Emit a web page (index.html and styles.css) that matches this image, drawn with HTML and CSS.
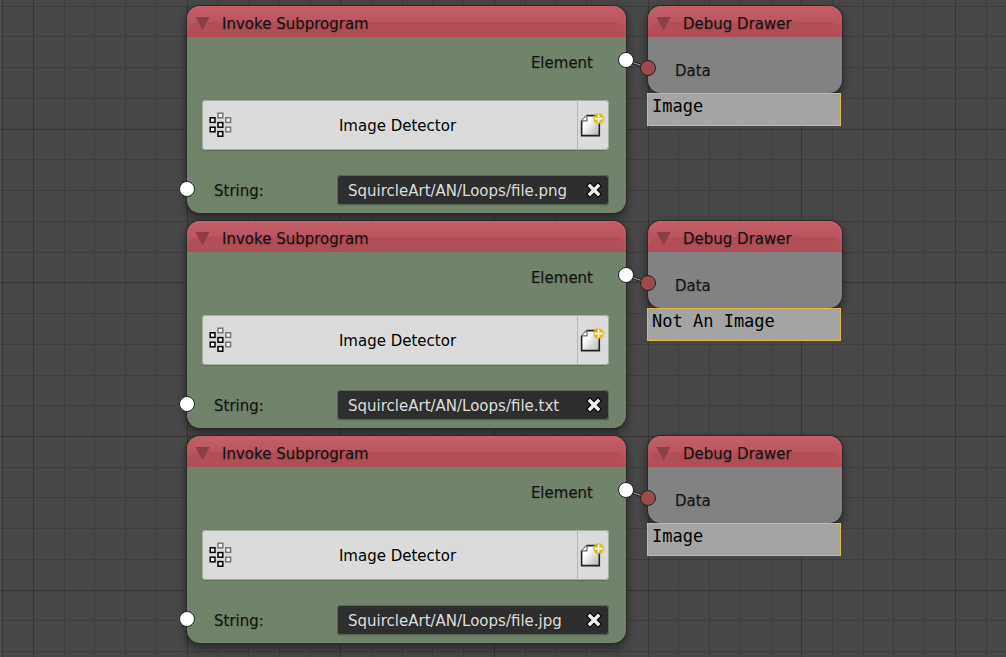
FILE: index.html
```html
<!DOCTYPE html>
<html lang="en">
<head>
<meta charset="utf-8">
<title>Node Editor</title>
<link rel="stylesheet" href="styles.css">
</head>
<body>
<svg class="defs" width="0" height="0" aria-hidden="true">
  <defs>
    <linearGradient id="paper" x1="0" y1="0" x2="1" y2="1">
      <stop offset="0.3" stop-color="#fff"/>
      <stop offset="1" stop-color="#b4b4b4"/>
    </linearGradient>
    <radialGradient id="glow">
      <stop offset="0.3" stop-color="#e3b70c"/>
      <stop offset="0.7" stop-color="#e3b70c" stop-opacity="0.85"/>
      <stop offset="1" stop-color="#e3b70c" stop-opacity="0"/>
    </radialGradient>
    <symbol id="icon-tree" viewBox="0 0 24 26">
      <g fill="#f4f4f4" stroke-width="1.5">
        <g stroke="#777">
          <rect x="9" y="1.2" width="4.8" height="4.6"/>
          <rect x="16.8" y="5.8" width="4.8" height="4.6"/>
          <rect x="16.8" y="15.2" width="4.8" height="4.6"/>
        </g>
        <g stroke="#000">
          <rect x="1.2" y="5.8" width="4.8" height="4.6"/>
          <rect x="1.2" y="15.2" width="4.8" height="4.6"/>
          <rect x="9" y="10.6" width="4.8" height="4.6"/>
          <rect x="9" y="19.6" width="4.8" height="4.6"/>
        </g>
      </g>
    </symbol>
    <symbol id="icon-new" viewBox="0 0 26 26">
      <path d="M8 3.6H20.3V23.6H2.6V9.2z" fill="url(#paper)" stroke="#222" stroke-width="1.6"/>
      <path d="M8 3.6V8.8H2.6" fill="#fff" stroke="#666" stroke-width="1.2"/>
      <circle cx="19.6" cy="6.6" r="6.4" fill="url(#glow)"/>
      <path d="M19.6 2.6v8M15.6 6.6h8" stroke="#fff" stroke-width="1.6"/>
    </symbol>
    <symbol id="icon-x" viewBox="0 0 16 16">
      <path d="M4 4L12 12M12 4L4 12" stroke="#000" stroke-width="5.6" stroke-linecap="square"/>
      <path d="M4 4L12 12M12 4L4 12" stroke="#eee" stroke-width="3.4" stroke-linecap="square"/>
    </symbol>
    <symbol id="icon-fold" viewBox="0 0 16 16">
      <path d="M0.5 1H15.5L8 15.5z" fill="#8a3f48"/>
    </symbol>
    <pattern id="grid" x="33" y="129" width="461" height="461" patternUnits="userSpaceOnUse">
      <path class="minor" d="M31 0h1v461h-1zM61 0h1v461h-1zM92 0h1v461h-1zM123 0h1v461h-1zM184 0h1v461h-1zM215 0h1v461h-1zM246 0h1v461h-1zM277 0h1v461h-1zM338 0h1v461h-1zM369 0h1v461h-1zM399 0h1v461h-1zM430 0h1v461h-1z"/>
      <path class="minor" d="M0 30h461v1H0zM0 61h461v1H0zM0 92h461v1H0zM0 123h461v1H0zM0 184h461v1H0zM0 215h461v1H0zM0 246h461v1H0zM0 276h461v1H0zM0 338h461v1H0zM0 368h461v1H0zM0 399h461v1H0zM0 430h461v1H0z"/>
      <path class="major" d="M0 0h1v461h-1zM154 0h1v461h-1zM307 0h1v461h-1zM0 0h461v1H0zM0 153h461v1H0zM0 307h461v1H0z"/>
    </pattern>
  </defs>
</svg>
<main class="editor">
  <svg class="grid" width="100%" height="100%" aria-hidden="true"><rect width="100%" height="100%" fill="url(#grid)"/></svg>

  <section class="row">
    <article class="node invoke">
      <header class="head"><button class="fold" aria-label="Collapse"><svg><use href="#icon-fold"/></svg></button><h2>Invoke Subprogram</h2></header>
      <div class="body">
        <div class="out">Element</div>
        <div class="picker">
          <button class="choose"><svg class="tree"><use href="#icon-tree"/></svg><span>Image Detector</span></button>
          <button class="new" aria-label="New subprogram"><svg><use href="#icon-new"/></svg></button>
        </div>
        <div class="prop">
          <label for="s1">String:</label>
          <div class="field"><input id="s1" type="text" value="SquircleArt/AN/Loops/file.png"><button class="clear" aria-label="Clear"><svg><use href="#icon-x"/></svg></button></div>
        </div>
      </div>
      <i class="socket in"></i>
    </article>
    <div class="debug">
      <article class="node drawer">
        <header class="head"><button class="fold" aria-label="Collapse"><svg><use href="#icon-fold"/></svg></button><h2>Debug Drawer</h2></header>
        <div class="data">Data</div>
      </article>
      <output class="result">Image</output>
      <svg class="link" viewBox="0 0 40 26" aria-hidden="true"><path d="M9 9L31 17" stroke="#222" stroke-width="3"/><path d="M9 9L31 17" stroke="#aaa"/><circle class="white" cx="9" cy="9" r="7.5"/><circle class="red" cx="31" cy="17" r="7.5"/></svg>
    </div>
  </section>

  <section class="row">
    <article class="node invoke">
      <header class="head"><button class="fold" aria-label="Collapse"><svg><use href="#icon-fold"/></svg></button><h2>Invoke Subprogram</h2></header>
      <div class="body">
        <div class="out">Element</div>
        <div class="picker">
          <button class="choose"><svg class="tree"><use href="#icon-tree"/></svg><span>Image Detector</span></button>
          <button class="new" aria-label="New subprogram"><svg><use href="#icon-new"/></svg></button>
        </div>
        <div class="prop">
          <label for="s2">String:</label>
          <div class="field"><input id="s2" type="text" value="SquircleArt/AN/Loops/file.txt"><button class="clear" aria-label="Clear"><svg><use href="#icon-x"/></svg></button></div>
        </div>
      </div>
      <i class="socket in"></i>
    </article>
    <div class="debug">
      <article class="node drawer">
        <header class="head"><button class="fold" aria-label="Collapse"><svg><use href="#icon-fold"/></svg></button><h2>Debug Drawer</h2></header>
        <div class="data">Data</div>
      </article>
      <output class="result">Not An Image</output>
      <svg class="link" viewBox="0 0 40 26" aria-hidden="true"><path d="M9 9L31 17" stroke="#222" stroke-width="3"/><path d="M9 9L31 17" stroke="#aaa"/><circle class="white" cx="9" cy="9" r="7.5"/><circle class="red" cx="31" cy="17" r="7.5"/></svg>
    </div>
  </section>

  <section class="row">
    <article class="node invoke">
      <header class="head"><button class="fold" aria-label="Collapse"><svg><use href="#icon-fold"/></svg></button><h2>Invoke Subprogram</h2></header>
      <div class="body">
        <div class="out">Element</div>
        <div class="picker">
          <button class="choose"><svg class="tree"><use href="#icon-tree"/></svg><span>Image Detector</span></button>
          <button class="new" aria-label="New subprogram"><svg><use href="#icon-new"/></svg></button>
        </div>
        <div class="prop">
          <label for="s3">String:</label>
          <div class="field"><input id="s3" type="text" value="SquircleArt/AN/Loops/file.jpg"><button class="clear" aria-label="Clear"><svg><use href="#icon-x"/></svg></button></div>
        </div>
      </div>
      <i class="socket in"></i>
    </article>
    <div class="debug">
      <article class="node drawer">
        <header class="head"><button class="fold" aria-label="Collapse"><svg><use href="#icon-fold"/></svg></button><h2>Debug Drawer</h2></header>
        <div class="data">Data</div>
      </article>
      <output class="result">Image</output>
      <svg class="link" viewBox="0 0 40 26" aria-hidden="true"><path d="M9 9L31 17" stroke="#222" stroke-width="3"/><path d="M9 9L31 17" stroke="#aaa"/><circle class="white" cx="9" cy="9" r="7.5"/><circle class="red" cx="31" cy="17" r="7.5"/></svg>
    </div>
  </section>
</main>
</body>
</html>
```

FILE: styles.css
```css
* { box-sizing: border-box; }
body {
  margin: 0;
  background: #474747;
  color: #111;
  font: 15px/20px "DejaVu Sans", sans-serif;
}
button { border: 0; padding: 0; background: none; color: inherit; font: inherit; }
svg { display: block; }
.defs { position: absolute; }
.minor { fill: #3d3d3d; }
.major { fill: #353535; }

.editor {
  position: relative;
  display: flex;
  flex-direction: column;
  gap: 8px;
  min-height: 100vh;
  padding: 6px 0 6px 187px;
  box-shadow: inset 1px 0 #555, inset 3px 0 #404040;
}
.grid { position: absolute; inset: 0; }

.row { position: relative; display: flex; align-items: flex-start; gap: 22px; }
.node {
  position: relative;
  border-radius: 13px;
  box-shadow: 0 0 0 1px #2a2a2a, 0 4px 10px 1px rgba(0, 0, 0, 0.45);
}
.invoke { width: 439px; background: #72836b; }
.drawer { width: 194px; background: #828282; }

.head {
  position: relative;
  display: flex;
  align-items: center;
  gap: 12px;
  height: 31px;
  padding: 4px 8px 0;
  border-radius: 13px 13px 0 0;
  background: linear-gradient(#c55f69, #b9545f 60%);
  overflow: hidden;
}
.head::before {
  content: "";
  position: absolute;
  inset: 16px 0 0;
  border-radius: 12px 12px 0 0;
  background: #b24e58;
}
.head h2 {
  position: relative;
  margin: 0;
  font-size: 15px;
  font-weight: 400;
  text-shadow: 0 1px 2px rgba(0, 0, 0, 0.2);
}
.fold { position: relative; width: 15px; height: 15px; }
.fold svg { width: 15px; height: 15px; }

.body { padding: 0 17px 8px 15px; }
.out {
  padding: 16px 16px 27px 0;
  text-align: right;
  text-shadow: 0 1px 2px rgba(0, 0, 0, 0.2);
}
.picker {
  display: flex;
  height: 50px;
  border-radius: 4px;
  background: #dbdbdb;
  color: #000;
  box-shadow: 0 0 0 1px #a5afa1 inset, 0 1px 1px rgba(0, 0, 0, 0.15);
}
.choose { flex: 1; display: flex; align-items: center; padding: 2px 0 0 7px; }
.choose span { flex: 1; padding-right: 15px; text-align: center; }
.tree { width: 24px; height: 26px; margin-bottom: 2px; }
.new {
  display: flex;
  align-items: center;
  width: 32px;
  padding-left: 1px;
  border-left: 1px solid #b4b4b4;
}
.new svg { width: 26px; height: 26px; }

.prop { display: flex; align-items: center; margin-top: 25px; text-shadow: 0 1px 2px rgba(0, 0, 0, 0.2); }
.prop label { flex: 1; padding: 2px 0 0 12px; }
.field {
  display: flex;
  align-items: center;
  width: 272px;
  height: 30px;
  padding: 0 7px 0 11px;
  border-radius: 4px;
  background: #2e2e2e;
  box-shadow: 0 0 0 1px #5c6658 inset, 0 1px #65745f;
}
.field input {
  flex: 1;
  min-width: 0;
  padding: 2px 0 0;
  border: 0;
  outline: 0;
  background: none;
  color: #ddd;
  font: inherit;
}
.clear svg { width: 16px; height: 16px; }

.socket.in {
  position: absolute;
  left: -8px;
  top: 175px;
  width: 16px;
  height: 16px;
  border: 1px solid #222;
  border-radius: 50%;
  background: #fff;
}
.debug { position: relative; }
.data { padding: 24px 27px 12px; text-shadow: 0 1px 2px rgba(0, 0, 0, 0.2); }
.result {
  position: relative;
  display: block;
  width: 194px;
  height: 33px;
  margin-left: -1px;
  padding: 2px 4px;
  border: 1px solid #e6b94f;
  background: rgba(166, 166, 166, 0.98);
  color: #000;
  font: 17px/20px "DejaVu Sans Mono", monospace;
}
.link {
  position: absolute;
  left: -31px;
  top: 45px;
  width: 40px;
  height: 26px;
  overflow: visible;
}
.link circle { stroke: #222; }
.white { fill: #fff; }
.red { fill: #9c4b4b; }
```
